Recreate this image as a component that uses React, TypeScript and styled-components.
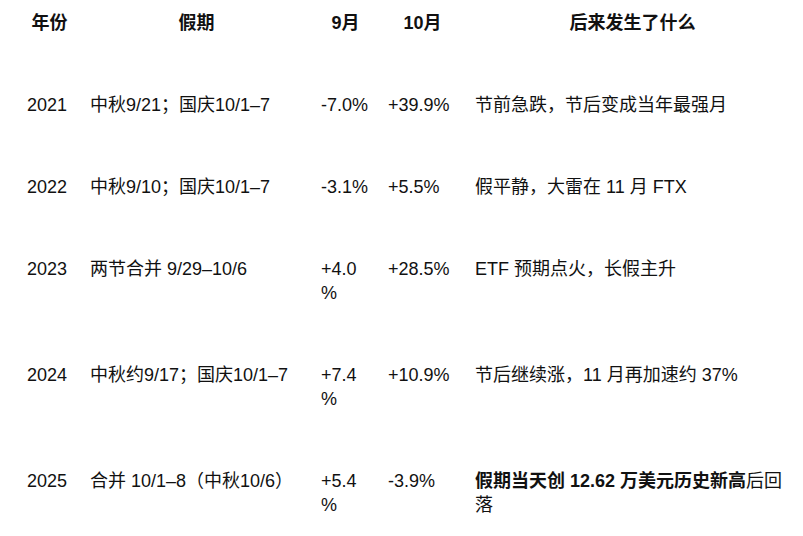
import React from "react";
import styled, { createGlobalStyle } from "styled-components";

const Global = createGlobalStyle`
  html, body { margin: 0; padding: 0; background: #fff; }
  body {
    font-family: "Liberation Sans", Arial, "Noto Sans CJK SC", sans-serif;
    color: #111;
  }
`;

const Page = styled.div`
  padding-left: 17px;
`;

const Table = styled.table`
  border-collapse: collapse;
  table-layout: fixed;
  width: 781px;
  font-size: 18px;
  line-height: 24px;
`;

const Col = styled.col<{ $w: number }>`
  width: ${(p) => p.$w}px;
`;

const Th = styled.th`
  padding: 11px 8px 29px 10px;
  font-weight: 700;
  text-align: center;
  vertical-align: top;
`;

const Td = styled.td`
  padding: 29px 8px 29px 10px;
  text-align: left;
  vertical-align: top;
  overflow-wrap: anywhere;
`;

const Strong = styled.strong`
  font-weight: 700;
`;

type Row = { year: string; holiday: string; sep: string; oct: string; what: React.ReactNode };

const rows: Row[] = [
  { year: "2021", holiday: "中秋9/21；国庆10/1–7", sep: "-7.0%", oct: "+39.9%", what: "节前急跌，节后变成当年最强月" },
  { year: "2022", holiday: "中秋9/10；国庆10/1–7", sep: "-3.1%", oct: "+5.5%", what: "假平静，大雷在 11 月 FTX" },
  { year: "2023", holiday: "两节合并 9/29–10/6", sep: "+4.0%", oct: "+28.5%", what: "ETF 预期点火，长假主升" },
  { year: "2024", holiday: "中秋约9/17；国庆10/1–7", sep: "+7.4%", oct: "+10.9%", what: "节后继续涨，11 月再加速约 37%" },
  {
    year: "2025",
    holiday: "合并 10/1–8（中秋10/6）",
    sep: "+5.4%",
    oct: "-3.9%",
    what: (
      <>
        <Strong>假期当天创 12.62 万美元历史新高</Strong>后回落
      </>
    ),
  },
];

export default function App() {
  return (
    <Page>
      <Global />
      <Table>
        <colgroup>
          <Col $w={63} />
          <Col $w={231} />
          <Col $w={67} />
          <Col $w={87} />
          <Col $w={333} />
        </colgroup>
        <thead>
          <tr>
            <Th>年份</Th>
            <Th>假期</Th>
            <Th>9月</Th>
            <Th>10月</Th>
            <Th>后来发生了什么</Th>
          </tr>
        </thead>
        <tbody>
          {rows.map((r) => (
            <tr key={r.year}>
              <Td>{r.year}</Td>
              <Td>{r.holiday}</Td>
              <Td>{r.sep}</Td>
              <Td>{r.oct}</Td>
              <Td>{r.what}</Td>
            </tr>
          ))}
        </tbody>
      </Table>
    </Page>
  );
}
